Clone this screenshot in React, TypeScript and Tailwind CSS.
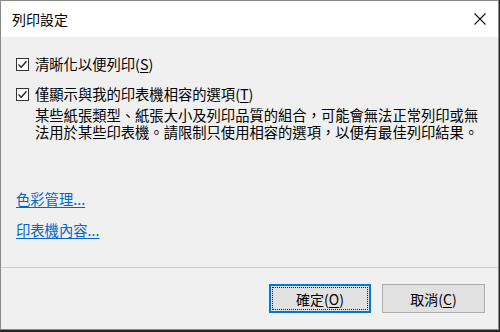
import React from "react";

const font = {
  fontFamily: '"Noto Sans CJK TC", "Noto Sans", sans-serif',
  fontFeatureSettings: '"locl" 1',
};

function Check() {
  return (
    <span className="w-[13px] h-[13px] border border-[#333333] bg-white flex items-center justify-center shrink-0">
      <svg width="11" height="11" viewBox="0 0 11 11">
        <polyline points="1.5,5.5 4.2,8.3 9.5,2.2" fill="none" stroke="#222" strokeWidth="1.3" />
      </svg>
    </span>
  );
}

export default function App() {
  return (
    <div lang="zh-TW" className="w-[500px] h-[332px] bg-[#262626] text-black" style={font}>
      <div className="w-[499px] h-[330px] border border-[#8a8a8a] flex flex-col bg-[#f0f0f0]">
        <div className="h-[36px] bg-white flex items-center justify-between pl-[11px] pr-[12px] shrink-0">
          <span className="text-[14px] leading-none">列印設定</span>
          <svg width="12" height="12" viewBox="0 0 12 12">
            <path d="M0.5 0.5 L11.5 11.5 M11.5 0.5 L0.5 11.5" stroke="#111" strokeWidth="1.1" />
          </svg>
        </div>
        <div className="flex-1 flex flex-col">
          <div className="pt-[17px] pl-[15px] flex flex-col">
            <div className="h-[20px] flex items-center gap-[6px]">
              <Check />
              <span className="text-[14.3px] leading-none">
                清晰化以便列印(<span className="underline underline-offset-2">S</span>)
              </span>
            </div>
            <div className="h-[20px] mt-[10px] flex items-center gap-[6px]">
              <Check />
              <span className="text-[14.3px] leading-none">
                僅顯示與我的印表機相容的選項(<span className="underline underline-offset-2">T</span>)
              </span>
            </div>
            <div className="pl-[19px] mt-[2px] text-[14.3px] leading-[17px] w-[470px]">
              <div className="whitespace-nowrap">某些紙張類型、紙張大小及列印品質的組合，可能會無法正常列印或無</div>
              <div className="whitespace-nowrap">法用於某些印表機。請限制只使用相容的選項，以便有最佳列印結果。</div>
            </div>
            <div className="mt-[50px] h-[18px] flex items-center">
              <span className="text-[14.3px] leading-none text-[#0066cc] underline underline-offset-2">色彩管理...</span>
            </div>
            <div className="mt-[13px] h-[18px] flex items-center">
              <span className="text-[14.3px] leading-none text-[#0066cc] underline underline-offset-2">印表機內容...</span>
            </div>
          </div>
          <div className="flex-1" />
          <div className="border-t border-[#d0d0d0] h-[62px] flex justify-end items-start pt-[16px] pr-[13px] gap-[11px] shrink-0">
            <div className="w-[102px] h-[29px] border-2 border-[#0078d7] bg-[#e1e1e1] p-[1px] flex">
              <div className="flex-1 border border-dotted border-[#222] flex items-center justify-center">
                <span className="text-[14px] leading-none">
                  確定(<span className="underline underline-offset-2">O</span>)
                </span>
              </div>
            </div>
            <div className="w-[103px] h-[29px] border border-[#adadad] bg-[#e1e1e1] flex items-center justify-center">
              <span className="text-[14px] leading-none">
                取消(<span className="underline underline-offset-2">C</span>)
              </span>
            </div>
          </div>
        </div>
      </div>
    </div>
  );
}
